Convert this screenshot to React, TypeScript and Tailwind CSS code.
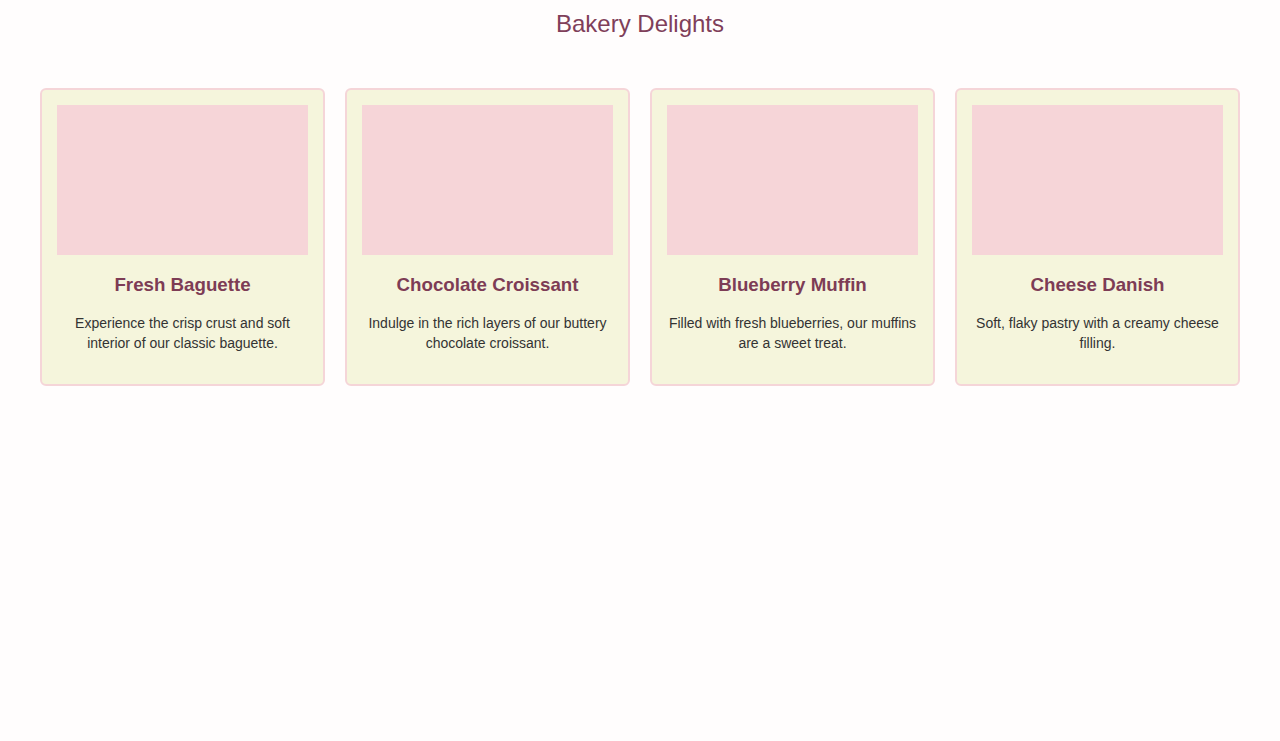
const items = [
  {
    name: "Fresh Baguette",
    text: "Experience the crisp crust and soft interior of our classic baguette.",
  },
  {
    name: "Chocolate Croissant",
    text: "Indulge in the rich layers of our buttery chocolate croissant.",
  },
  {
    name: "Blueberry Muffin",
    text: "Filled with fresh blueberries, our muffins are a sweet treat.",
  },
  {
    name: "Cheese Danish",
    text: "Soft, flaky pastry with a creamy cheese filling.",
  },
];

export default function App() {
  return (
    <div className="min-h-screen bg-[#fffdfd] font-['Liberation_Sans',Arial,sans-serif]">
      <h1 className="pt-[9px] text-center text-[24px] leading-[30px] text-[#7f3f5a]">
        Bakery Delights
      </h1>
      <div className="mt-[49px] grid grid-cols-4 gap-5 px-10">
        {items.map((item) => (
          <div
            key={item.name}
            className="rounded-md border-2 border-[#f5d5d8] bg-[#f5f5dc] p-[15px] text-center"
          >
            <div className="h-[150px] w-full bg-[#f6d5d8]" />
            <h3 className="mt-[18px] text-[18.72px] font-bold leading-[23px] text-[#7d3c55]">
              {item.name}
            </h3>
            <p className="mt-[17px] mb-[16px] text-[14px] leading-[20px] text-[#333333]">
              {item.text}
            </p>
          </div>
        ))}
      </div>
    </div>
  );
}
